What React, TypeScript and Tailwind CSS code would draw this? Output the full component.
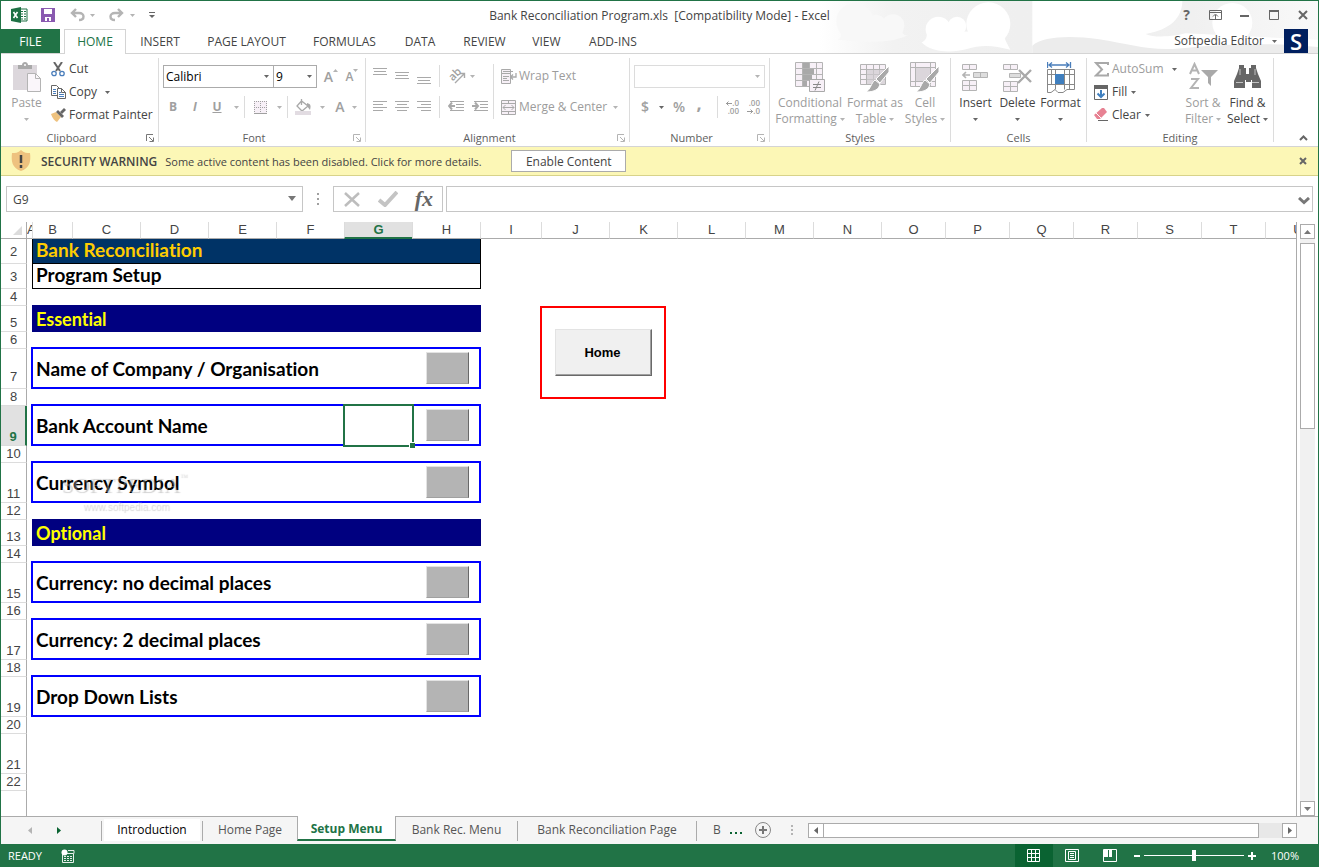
import React from 'react';

type Children = { children?: React.ReactNode };

interface IconProps extends Children {
    w: number;
    h: number;
    className?: string;
}

const Icon: React.FC<IconProps> = ({ w, h, className = '', children }) => (
    <svg width={w} height={h} viewBox={`0 0 ${w} ${h}`} fill="none" className={`shrink-0 ${className}`} aria-hidden="true">
        {children}
    </svg>
);

const Caret: React.FC<{ className?: string }> = ({ className = 'text-[#666666]' }) => (
    <Icon w={5} h={3} className={className}>
        <path d="M0 0h5L2.500 3z" fill="currentColor" />
    </Icon>
);

const GRAY = 'text-[#b4b4b4]';

/* ---------- icons ---------- */

const ExcelLogo = () => (
    <Icon w={17} h={16}>
        <path d="M9 2h7v12H9z" fill="#fff" stroke="#1e7145" />
        <path d="M10 4.500h2M10 7h2M10 9.500h2M10 12h2M13 4.500h2M13 7h2M13 9.500h2M13 12h2" stroke="#1e7145" />
        <path d="M0 2l10-2v16L0 14z" fill="#1e7145" />
        <path d="M2.500 5l4 6M6.500 5l-4 6" stroke="#fff" strokeWidth="1.600" />
    </Icon>
);

const SaveIcon = () => (
    <Icon w={14} h={14}>
        <path d="M0 0h14v14H0z" fill="#8a5ab0" />
        <path d="M3 1h8v5H3zM4 9h6v4H8v-3H6v3H4z" fill="#fff" />
    </Icon>
);

const UndoIcon = ({ flip = false }: { flip?: boolean }) => (
    <Icon w={15} h={14} className={flip ? '-scale-x-100' : ''}>
        <path d="M6 1L2 5l4 4M2 5h7c6 0 6 7 0 7" stroke="#b4b4b4" strokeWidth="2.400" />
    </Icon>
);

const PasteIcon = () => (
    <Icon w={28} h={31}>
        <path d="M0 3h24v25H0z" fill="#dcd7dc" />
        <path d="M5 3h4c0-4 6-4 6 0h4v4H5z" fill="#a9a9a9" />
        <circle cx="12" cy="3" r="1" fill="#fff" />
        <path d="M14.500 11.500h8l5 5v13h-13z" fill="#faf6fa" stroke="#b4b4b4" />
        <path d="M22.500 11.500v5h5" stroke="#b4b4b4" />
    </Icon>
);

const CutIcon = () => (
    <Icon w={15} h={15}>
        <path d="M3 0l6 9M11 0L5 9" stroke="#666" strokeWidth="2" />
        <circle cx="3" cy="11.500" r="2.200" stroke="#4a7ebb" strokeWidth="1.300" />
        <circle cx="11" cy="11.500" r="2.200" stroke="#4a7ebb" strokeWidth="1.300" />
    </Icon>
);

const CopyIcon = () => (
    <Icon w={15} h={14}>
        <path d="M.5.5h5l3 3v7h-8z" fill="#fff" stroke="#666" />
        <path d="M2 4.500h3M2 6.500h3M2 8.500h3" stroke="#4a7ebb" />
        <path d="M6.500 3.500h4l4 4v6h-8z" fill="#fff" stroke="#666" />
        <path d="M10.500 3.500v4h4" stroke="#666" />
        <path d="M8 7.500h2M8 9.500h5M8 11.500h5" stroke="#4a7ebb" />
    </Icon>
);

const BrushIcon = () => (
    <Icon w={15} h={14}>
        <path d="M0 6l5-2 5 5-4 5c-2-1-5-4-6-8z" fill="#eec27f" />
        <path d="M5 4l2-2 6 6-2 2z" fill="#666" />
        <path d="M9 4l4-4 2 2-4 4z" fill="#666" />
    </Icon>
);

const Lines: React.FC<{ rows: [number, number, number][]; h?: number }> = ({ rows, h = 14 }) => (
    <Icon w={14} h={h}>
        {rows.map(([x, y, w]) => (
            <path key={y} d={`M${x} ${y}.5h${w}`} stroke="#a9a9a9" />
        ))}
    </Icon>
);

const VAlign = ({ top }: { top: number }) => (
    <Lines h={22} rows={[[0, top, 14], [1, top + 3, 12], [0, top + 6, 14]]} />
);

const HAlign = ({ x }: { x: number }) => (
    <Lines h={12} rows={[[0, 0, 14], [x, 3, 10], [0, 6, 14], [x, 9, 10]]} />
);

const IndentIcon = ({ out = false }: { out?: boolean }) => (
    <Icon w={16} h={12}>
        <path d="M2 .5h14M8 3.500h8M8 6.500h8M2 9.500h14" stroke="#a9a9a9" />
        <path d={out ? 'M4 1.500L1 5l3 3.500M1 5h6' : 'M3 1.500L6 5 3 8.500M6 5H0'} stroke="#a9a9a9" strokeWidth="2" />
    </Icon>
);

const OrientationIcon = () => (
    <span className="relative block h-4 w-[18px]">
        <span className="absolute top-0 left-0 -rotate-45 text-[11px] leading-3 font-semibold">ab</span>
        <Icon w={18} h={16}>
            <path d="M7 15l9-9M12 5.500h4.500V10" stroke="#a9a9a9" strokeWidth="1.400" />
        </Icon>
    </span>
);

const WrapIcon = () => (
    <Icon w={16} h={15}>
        <path d="M.5.5h9v4h-9zM.5 4.500h9v10h-9z" fill="#f7f0f7" stroke="#a9a9a9" />
        <path d="M2 2.500h10M2 7.500h6M2 9.500h4M2 11.500h6" stroke="#a9a9a9" />
        <path d="M15 4v4h-5M12 5.500L9.500 8l2.500 2.500" stroke="#a9a9a9" strokeWidth="1.300" />
    </Icon>
);

const MergeIcon = () => (
    <Icon w={15} h={15}>
        <path d="M.5.5h14v14H.5zM.5 3.500h14M.5 11.500h14M7.500.5v3M7.500 11.500v3" fill="#f7f0f7" stroke="#a9a9a9" />
        <path d="M2 7.500h11M4.500 5L2 7.500 4.500 10M10.500 5L13 7.500 10.500 10" stroke="#a9a9a9" />
    </Icon>
);

const DecimalIcon = ({ less = false }: { less?: boolean }) => (
    <span className="flex w-4 flex-col items-end text-[8px] leading-2 font-semibold">
        <span className="flex items-center">
            {!less && <Icon w={6} h={5}><path d="M0 2.500h6M2.500.5l-2 2 2 2" stroke="#999" /></Icon>}
            {less ? '.00' : '.0'}
        </span>
        <span className="flex items-center">
            {less && <Icon w={6} h={5}><path d="M0 2.500h6M3.500.5l2 2-2 2" stroke="#999" /></Icon>}
            {less ? '.0' : '.00'}
        </span>
    </span>
);

const ConditionalIcon = () => (
    <Icon w={30} h={30}>
        <path d="M.5.5h27v24H.5zM.5 6.500h27M.5 12.500h27M.5 18.500h27M7.500.5v24M14.500.5v24M21.500.5v24" fill="#f7f0f7" stroke="#b4b4b4" />
        <path d="M8 1h6v5H8zM8 7h11v5H8zM8 13h9v5H8zM8 19h4v5H8z" fill="#a9a9a9" />
        <path d="M14.500 17.500h15v12h-15z" fill="#f7f0f7" stroke="#a9a9a9" />
        <path d="M18 22.500h8M18 25.500h8M24 19.500l-4 9" stroke="#888" />
    </Icon>
);

const TableBrushIcon = ({ cell = false }: { cell?: boolean }) => (
    <Icon w={30} h={30}>
        <path d={cell ? 'M.5.5h25v24H.5zM.5 5.500h25M.5 19.500h25M5.500.5v24M20.500.5v24' : 'M.5 2.500h25v20H.5zM.5 7.500h25M.5 12.500h25M.5 17.500h25M6.500 2.500v20M13.500 2.500v20M19.500 2.500v20'} fill="#f7f0f7" stroke="#b4b4b4" />
        <path d={cell ? 'M6 6h14v13H6z' : 'M7 8h18v14H7z'} fill="#cfcbcf" fillOpacity=".7" />
        <path d="M29 4v6l-9 11-4-4z" fill="#a9a9a9" stroke="#fff" />
        <path d="M15 18l5 4c-1 5-5 8-14 8 5-3 5-9 9-12z" fill="#a9a9a9" stroke="#fff" />
    </Icon>
);

const InsertIcon = () => (
    <Icon w={27} h={29}>
        <path d="M.5 1.500h14v5H.5zM7.500 1.500v5M.5 17.500h14v10H.5zM7.500 17.500v10M.5 22.500h14" fill="#f7f0f7" stroke="#b4b4b4" />
        <path d="M11.500 9.500h14v5h-14zM18.500 9.500v5" fill="#ddd" stroke="#b4b4b4" />
        <path d="M8 12H1M4 9l-3 3 3 3" stroke="#b4b4b4" strokeWidth="1.600" />
    </Icon>
);

const DeleteIcon = () => (
    <Icon w={30} h={29}>
        <path d="M.5 1.500h14v5H.5zM7.500 1.500v5M.5 18.500h14v10H.5zM7.500 18.500v10M.5 23.500h14" fill="#f7f0f7" stroke="#b4b4b4" />
        <path d="M6.500 10.500h11v4h-11z" fill="#ddd" stroke="#b4b4b4" />
        <path d="M16 7l12 12M28 7L15 20" stroke="#a9a9a9" strokeWidth="2.400" />
    </Icon>
);

const FormatIcon = () => (
    <Icon w={28} h={31}>
        <path d="M.5 0v6M23.500 0v6M2 3h20M5 .5L2 3l3 2.500M19 .5L22 3l-3 2.500" stroke="#4a7ebb" strokeWidth="1.300" />
        <path d="M.5 7.500h27v20H20l-4 3h-5l-3-3-4 3H.5zM.5 12.500h27M.5 22.500h27M8.500 7.500v20M17.500 7.500v20M22.500 7.500v20M4.500 7.500v15" fill="#fff" stroke="#888" />
        <path d="M8 12h9v10H8z" fill="#3f7fbf" />
    </Icon>
);

const SigmaIcon = () => (
    <Icon w={16} h={15}>
        <path d="M14 3V1H2l6 6.500L2 13.500h12V11" stroke="#a9a9a9" strokeWidth="2" />
    </Icon>
);

const FillIcon = () => (
    <Icon w={14} h={15}>
        <path d="M.5.5h13v14H.5z" fill="#fff" stroke="#666" />
        <path d="M0 0h14v4H0z" fill="#666" />
        <path d="M7 5v7M3.500 8.500L7 12l3.500-3.500" stroke="#3f7fbf" strokeWidth="2" />
    </Icon>
);

const EraserIcon = () => (
    <Icon w={14} h={14}>
        <path d="M8 0h2l3 4-7 7H3L0 7z" fill="#e78293" />
        <path d="M2 5l5 5" stroke="#fff" />
        <path d="M4 12.500h10" stroke="#666" />
    </Icon>
);

const SortIcon = () => (
    <Icon w={29} h={30}>
        <path d="M1 12L5.500 2 10 12M2.500 8.500h6M2 17h7L2 26h8" stroke="#b4b4b4" strokeWidth="2" />
        <path d="M12 8h17l-7 7v9l-3-3v-6z" fill="#a9a9a9" />
    </Icon>
);

const FindIcon = () => (
    <Icon w={27} h={26}>
        <path d="M5 1h5v3h2v6h3V4h2V1h5v3l2 6 3 7v7h-9v-8h-1v2h-5v-2h-1v8H0v-7l3-7 2-6z" fill="#666" />
        <path d="M6 5v6M21 5v6M2 18.500h7M18 18.500h7" stroke="#fff" strokeOpacity=".6" />
    </Icon>
);

const LauncherIcon = ({ dim = false }: { dim?: boolean }) => (
    <Icon w={8} h={8} className={dim ? GRAY : 'text-[#777777]'}>
        <path d="M.5 7V.5H7M3 3l4 4M7.500 3.500v4h-4" stroke="currentColor" />
    </Icon>
);

/* ---------- ribbon parts ---------- */

interface GroupProps extends Children {
    label: string;
    className: string;
    launcher?: 'normal' | 'dim';
}

const Group: React.FC<GroupProps> = ({ label, className, launcher, children }) => (
    <>
        <section aria-label={label} className={`flex shrink-0 flex-col ${className}`}>
            <div className="flex h-[72px]">{children}</div>
            <div className="flex h-4 items-center">
                <span className="flex-1 text-center text-[11px] leading-4 text-[#5e5e5e]">{label}</span>
                {launcher && (
                    <button aria-label={`${label} settings`} className="mr-1 ml-1"><LauncherIcon dim={launcher === 'dim'} /></button>
                )}
            </div>
        </section>
        <div className="h-[84px] w-px shrink-0 bg-[#dcdcdc]" />
    </>
);

interface BigButtonProps {
    icon: React.ReactNode;
    label: string;
    second?: string;
    className: string;
    dim?: boolean;
}

const BigButton: React.FC<BigButtonProps> = ({ icon, label, second, className, dim }) => (
    <button className={`flex shrink-0 flex-col items-center pt-px whitespace-nowrap ${dim ? 'text-[#9c9c9c]' : 'text-[#444444]'} ${className}`}>
        <span className="flex h-9 items-center justify-center">{icon}</span>
        <span className="leading-4">{label}</span>
        <span className="flex h-4 items-center gap-[3px] leading-4">
            {second}
            <Caret className={dim ? GRAY : undefined} />
        </span>
    </button>
);

interface RowButtonProps {
    icon: React.ReactNode;
    label: string;
    caret?: string;
    dim?: boolean;
}

const RowButton: React.FC<RowButtonProps> = ({ icon, label, caret, dim }) => (
    <button className={`flex h-[23px] items-center pb-px whitespace-nowrap ${dim ? 'text-[#9c9c9c]' : 'text-[#444444]'}`}>
        <span className="flex w-[18px] items-center">{icon}</span>
        {label}
        {caret && <span className={caret}><Caret /></span>}
    </button>
);

interface ComboProps {
    label: string;
    value: string;
    className: string;
    dim?: boolean;
}

const Combo: React.FC<ComboProps> = ({ label, value, className, dim }) => (
    <div className={`relative h-[23px] border ${dim ? 'border-[#dcdcdc]' : 'border-[#ababab]'} ${className}`}>
        <select aria-label={label} disabled={dim} className="block h-full w-full appearance-none bg-transparent pl-[2px] text-black">
            <option>{value}</option>
        </select>
        <span className="pointer-events-none absolute top-[9px] right-1 flex"><Caret className={dim ? GRAY : undefined} /></span>
    </div>
);

const VLine = () => <span className="h-[22px] w-px shrink-0 bg-[#dcdcdc]" />;

const ToolButton: React.FC<Children & { label: string; className?: string }> = ({ label, className = '', children }) => (
    <button aria-label={label} className={`flex h-[22px] shrink-0 items-center justify-center text-[#a0a0a0] ${className}`}>
        {children}
    </button>
);

const ToolCaret: React.FC<{ dark?: boolean; className?: string }> = ({ dark, className = '' }) => (
    <button aria-label="More" className={`flex h-[22px] w-4 shrink-0 items-center justify-center ${className}`}>
        <Caret className={dark ? undefined : GRAY} />
    </button>
);

/* ---------- window chrome ---------- */

const Clouds = () => (
    <svg width="499" height="52" viewBox="0 0 1497 158" preserveAspectRatio="none" className="absolute top-0 right-0" aria-hidden="true">
        <defs>
            <linearGradient id="sky" x1="0" x2="1" y1="0" y2="0">
                <stop offset="0" stopColor="#fff" />
                <stop offset=".15" stopColor="#f2f2f2" />
                <stop offset=".4" stopColor="#efefef" />
                <stop offset=".75" stopColor="#f0f0f0" />
                <stop offset="1" stopColor="#f9f9f9" />
            </linearGradient>
        </defs>
        <path d="M0 0h1497v158H0z" fill="url(#sky)" />
        <g fill="#f8f8f8">
            <circle cx="108" cy="62" r="56" />
            <circle cx="172" cy="70" r="28" />
            <circle cx="222" cy="74" r="34" />
            <path d="M60 90h190c0 10 6 16 16 14-50 26-130 22-210 14 14-8 14-18 4-28z" />
        </g>
        <g fill="#fff">
            <circle cx="508" cy="70" r="66" />
            <circle cx="414" cy="76" r="28" />
            <circle cx="358" cy="86" r="38" />
            <path d="M322 90l230 6c4 20 12 34 22 52-50-14-90-16-130-2-50 14-110 8-136-20 14-6 18-18 14-36z" />
            <path d="M640 0h450c0 50-36 88-110 100 30 14 90 6 120-2l397 20v40H640z" />
            <circle cx="1240" cy="66" r="60" />
        </g>
        <path d="M640 136c30-28 110-32 200-20 90 14 150 36 240 28 120-12 250-20 417-4v18H640z" fill="#ececec" />
    </svg>
);

const TABS: [string, string][] = [
    ['INSERT', 'w-[68px]'],
    ['PAGE LAYOUT', 'w-[105px]'],
    ['FORMULAS', 'w-[91px]'],
    ['DATA', 'w-[60px]'],
    ['REVIEW', 'w-[69px]'],
    ['VIEW', 'w-[55px]'],
    ['ADD-INS', 'w-[78px]'],
];

const TitleBar = () => (
    <header className="relative">
        <Clouds />
        <div className="relative grid h-7 grid-cols-[1fr_auto_1fr] items-center">
            <div className="flex items-center pl-[10px]">
                <ExcelLogo />
                <button aria-label="Save" className="ml-[13px]"><SaveIcon /></button>
                <button aria-label="Undo" className="ml-[15px]"><UndoIcon /></button>
                <button aria-label="Undo history" className="ml-[5px]"><Caret className={GRAY} /></button>
                <button aria-label="Redo" className="ml-[14px]"><UndoIcon flip /></button>
                <button aria-label="Redo history" className="ml-[6px]"><Caret className={GRAY} /></button>
                <button aria-label="Customize toolbar" className="ml-[14px]">
                    <Icon w={6} h={6}><path d="M0 .5h6" stroke="#666" /><path d="M0 3h6L3 6z" fill="#666" /></Icon>
                </button>
            </div>
            <h1 className="pt-px whitespace-pre text-[#444444]">Bank Reconciliation Program.xls  [Compatibility Mode] - Excel</h1>
            <div className="flex justify-end pr-px text-[#666666]">
                <button aria-label="Help" className="flex w-[29px] items-center justify-center text-[14px] leading-5 font-bold">?</button>
                <button aria-label="Ribbon display" className="flex w-[29px] items-center justify-center">
                    <Icon w={13} h={10}><path d="M.5.5h12v9H.5zM.5 2.500h12M6.500 9V5M4 6.500L6.500 4 9 6.500" stroke="currentColor" /></Icon>
                </button>
                <button aria-label="Minimize" className="flex w-[29px] items-center justify-center">
                    <Icon w={9} h={10}><path d="M0 6h9" stroke="currentColor" strokeWidth="2" /></Icon>
                </button>
                <button aria-label="Maximize" className="flex w-[29px] items-center justify-center">
                    <Icon w={10} h={10}><path d="M.5.5h9v9h-9z" stroke="currentColor" /><path d="M0 1h10" stroke="currentColor" strokeWidth="2" /></Icon>
                </button>
                <button aria-label="Close" className="flex w-[29px] items-center justify-center">
                    <Icon w={10} h={10}><path d="M1 1l8 8M9 1L1 9" stroke="currentColor" strokeWidth="2" /></Icon>
                </button>
            </div>
        </div>
        <nav className="relative flex h-[25px] border-b border-[#d4d4d4] text-[#444444]">
            <button className="w-[59px] bg-[#217346] pt-px text-white">FILE</button>
            <button className="-mb-px ml-1 w-[62px] border border-b-0 border-[#d4d4d4] bg-white text-[#217346]">HOME</button>
            {TABS.map(([name, width]) => (
                <button key={name} className={`pt-px whitespace-nowrap ${width}`}>{name}</button>
            ))}
            <div className="flex-1" />
            <button className="mr-[7px] flex items-center gap-2 whitespace-nowrap">Softpedia Editor <Caret /></button>
            <div className="mr-[10px] flex h-6 w-6 items-center justify-center bg-[#001f5f] text-[22px] font-semibold text-white">S</div>
        </nav>
    </header>
);

const Ribbon = () => (
    <div className="flex border-b border-[#d4d4d4] bg-white pt-1">
        <Group label="Clipboard" className="w-[157px]" launcher="normal">
            <BigButton icon={<PasteIcon />} label="Paste" className="w-[50px] pl-px" dim />
            <div className="flex flex-col items-start">
                <RowButton icon={<CutIcon />} label="Cut" />
                <RowButton icon={<CopyIcon />} label="Copy" caret="ml-2" />
                <RowButton icon={<BrushIcon />} label="Format Painter" />
            </div>
        </Group>
        <Group label="Font" className="w-[206px]" launcher="dim">
            <div className="flex flex-col pt-[7px]">
                <div className="flex items-center pl-1">
                    <Combo label="Font" value="Calibri" className="w-[111px]" />
                    <Combo label="Font size" value="9" className="-ml-px w-[44px]" />
                    <ToolButton label="Increase font size" className="w-6 pl-1 text-[14px] font-semibold">
                        A<Icon w={5} h={3} className={`mb-3 ${GRAY}`}><path d="M0 3h5L2.500 0z" fill="currentColor" /></Icon>
                    </ToolButton>
                    <ToolButton label="Decrease font size" className="w-[22px] text-[12px] font-semibold">A<Caret className={`mb-3 ${GRAY}`} /></ToolButton>
                </div>
                <div className="mt-2 flex items-center pl-[3px]">
                    <ToolButton label="Bold" className="w-[22px] font-bold">B</ToolButton>
                    <ToolButton label="Italic" className="w-[22px] font-bold italic">I</ToolButton>
                    <ToolButton label="Underline" className="w-[22px] font-bold underline">U</ToolButton>
                    <ToolCaret />
                    <VLine />
                    <ToolButton label="Borders" className="w-[26px] pl-1">
                        <Icon w={13} h={13}>
                            <path d="M0 0h13v13H0z" fill="#f7f0f7" />
                            <path d="M0 .5h13M0 6.500h13M.5 0v12M6.500 0v12M12.500 0v12" stroke="#a0a0a0" strokeDasharray="1 1" />
                            <path d="M0 12.500h13" stroke="#a0a0a0" />
                        </Icon>
                    </ToolButton>
                    <ToolCaret />
                    <VLine />
                    <ToolButton label="Fill color" className="w-[30px]">
                        <Icon w={17} h={16}>
                            <path d="M6.500 2L2 7l5 5 6-5zM6.500 6V0" stroke="#a9a9a9" strokeWidth="1.300" />
                            <path d="M12 4c4 1 4 3 3 7l-3-4z" fill="#a9a9a9" />
                            <path d="M0 12h16v4H0z" fill="#e2dce2" />
                        </Icon>
                    </ToolButton>
                    <ToolCaret className="-ml-1" />
                    <ToolButton label="Font color" className="w-5 text-[14px] font-semibold">A</ToolButton>
                    <ToolCaret className="-ml-1" />
                </div>
            </div>
        </Group>
        <Group label="Alignment" className="w-[263px]" launcher="dim">
            <div className="flex flex-col gap-[9px] pt-[7px] pl-[7px]">
                <div className="flex h-[22px] items-center gap-2">
                    <ToolButton label="Top align"><VAlign top={3} /></ToolButton>
                    <ToolButton label="Middle align"><VAlign top={7} /></ToolButton>
                    <ToolButton label="Bottom align"><VAlign top={12} /></ToolButton>
                    <VLine />
                    <ToolButton label="Orientation"><OrientationIcon /></ToolButton>
                    <Caret className={`-ml-1 ${GRAY}`} />
                </div>
                <div className="flex h-[22px] items-center gap-2">
                    <ToolButton label="Align left"><HAlign x={0} /></ToolButton>
                    <ToolButton label="Center"><HAlign x={2} /></ToolButton>
                    <ToolButton label="Align right"><HAlign x={4} /></ToolButton>
                    <VLine />
                    <ToolButton label="Decrease indent"><IndentIcon out /></ToolButton>
                    <ToolButton label="Increase indent"><IndentIcon /></ToolButton>
                </div>
            </div>
            <div className="mt-[6px] ml-[5px] h-[55px] w-px bg-[#dcdcdc]" />
            <div className="flex flex-col items-start gap-2 pt-[7px] pl-[7px]">
                <RowButton icon={<WrapIcon />} label="Wrap Text" dim />
                <div className="flex items-center">
                    <RowButton icon={<MergeIcon />} label="Merge & Center" dim />
                    <ToolCaret />
                </div>
            </div>
        </Group>
        <Group label="Number" className="w-[139px]" launcher="dim">
            <div className="flex flex-col gap-2 pt-[7px] pl-1">
                <Combo label="Number format" value="" className="w-[131px]" dim />
                <div className="flex items-center">
                    <ToolButton label="Currency" className="w-[22px] text-[14px] font-semibold">$</ToolButton>
                    <ToolCaret dark className="-ml-[3px]" />
                    <ToolButton label="Percent" className="w-[20px] text-[14px] font-semibold">%</ToolButton>
                    <ToolButton label="Comma" className="w-[20px] pb-2 text-[18px] font-bold">,</ToolButton>
                    <span className="w-2" />
                    <VLine />
                    <ToolButton label="Increase decimal" className="w-[26px]"><DecimalIcon /></ToolButton>
                    <ToolButton label="Decrease decimal" className="w-[16px]"><DecimalIcon less /></ToolButton>
                </div>
            </div>
        </Group>
        <Group label="Styles" className="w-[180px]">
            <BigButton icon={<ConditionalIcon />} label="Conditional" second="Formatting" className="w-[80px]" dim />
            <BigButton icon={<TableBrushIcon />} label="Format as" second="Table" className="w-[50px]" dim />
            <BigButton icon={<TableBrushIcon cell />} label="Cell" second="Styles" className="w-[50px]" dim />
        </Group>
        <Group label="Cells" className="w-[135px]">
            <BigButton icon={<InsertIcon />} label="Insert" className="ml-1 w-[41px]" />
            <BigButton icon={<DeleteIcon />} label="Delete" className="w-[43px]" />
            <BigButton icon={<FormatIcon />} label="Format" className="w-[43px]" />
        </Group>
        <Group label="Editing" className="w-[186px]">
            <div className="flex w-[93px] flex-col items-start pl-[7px]">
                <RowButton icon={<SigmaIcon />} label="AutoSum" caret="ml-2" dim />
                <RowButton icon={<FillIcon />} label="Fill" caret="ml-1" />
                <RowButton icon={<EraserIcon />} label="Clear" caret="ml-1" />
            </div>
            <BigButton icon={<SortIcon />} label="Sort &" second="Filter" className="w-[46px]" dim />
            <BigButton icon={<FindIcon />} label="Find &" second="Select" className="w-[43px]" />
        </Group>
        <div className="flex flex-1 items-end justify-end pr-[10px] pb-[5px]">
            <button aria-label="Collapse ribbon">
                <Icon w={9} h={6}><path d="M1 5l3.500-3.500L8 5" stroke="#666" strokeWidth="2" /></Icon>
            </button>
        </div>
    </div>
);

const SecurityBar = () => (
    <div className="flex h-[29px] items-center border-b border-[#d8d38a] bg-[#fcf7b6] pr-[11px] pl-[10px] text-[#444444]">
        <Icon w={20} h={22}>
            <path d="M10 0c3 3 6 3 9 3 1 8 0 15-9 18C1 18 0 11 1 3c3 0 6 0 9-3z" fill="#eec27f" />
            <path d="M10 5v8M10 15v3" stroke="#444" strokeWidth="2.500" />
        </Icon>
        <strong className="ml-[10px] pt-px font-semibold">SECURITY WARNING</strong>
        <span className="ml-2 w-[346px] pt-px text-[11px] whitespace-nowrap">Some active content has been disabled. Click for more details.</span>
        <button className="h-[22px] w-[115px] border border-[#ababab] bg-white pt-px">Enable Content</button>
        <div className="flex-1" />
        <button aria-label="Dismiss">
            <Icon w={8} h={8}><path d="M1 1l6 6M7 1L1 7" stroke="#666" strokeWidth="2" /></Icon>
        </button>
    </div>
);

const FormulaBar = () => (
    <div className="flex h-[46px] items-center pr-[5px] pl-[5px]">
        <div className="relative h-[26px] w-[297px] border border-[#c6c6c6]">
            <input aria-label="Name box" defaultValue="G9" className="block h-full w-full bg-transparent px-[6px] text-[#444444] outline-none" />
            <span className="pointer-events-none absolute top-[9px] right-[6px]">
                <Icon w={8} h={5}><path d="M0 0h8L4 5z" fill="#777" /></Icon>
            </span>
        </div>
        <div className="flex w-[30px] justify-center">
            <Icon w={2} h={12}><path d="M1 0v2M1 5v2M1 10v2" stroke="#a0a0a0" strokeWidth="2" /></Icon>
        </div>
        <div className="flex h-[26px] w-[110px] items-center justify-between border border-[#c6c6c6] pr-[9px] pl-[9px]">
            <button aria-label="Cancel">
                <Icon w={18} h={17}><path d="M2 2l14 13M16 2L2 15" stroke="#bdbdbd" strokeWidth="2.500" /></Icon>
            </button>
            <button aria-label="Enter">
                <Icon w={20} h={16}><path d="M1 9l6 5L19 1" stroke="#c4c4c4" strokeWidth="4" /></Icon>
            </button>
            <button aria-label="Insert function" className="font-['Liberation_Serif',serif] text-[22px] leading-6 font-bold text-[#666666] italic">fx</button>
        </div>
        <div className="relative ml-[3px] h-[26px] flex-1 border border-[#c6c6c6]">
            <input aria-label="Formula" className="block h-full w-full bg-transparent px-2 outline-none" />
            <span className="pointer-events-none absolute top-[10px] right-[2px]">
                <Icon w={12} h={8}><path d="M1 1l5 4.500L11 1" stroke="#777" strokeWidth="3" /></Icon>
            </span>
        </div>
    </div>
);

/* ---------- worksheet ---------- */

const COLUMNS: [string, string][] = [
    ['A', 'w-[5px]'],
    ['B', 'w-[40px]'],
    ['C', 'w-[68px]'],
    ['D', 'w-[68px]'],
    ['E', 'w-[68px]'],
    ['F', 'w-[68px]'],
    ['G', 'w-[68px]'],
    ['H', 'w-[68px]'],
    ['I', 'w-[61px]'],
    ['J', 'w-[68px]'],
    ['K', 'w-[68px]'],
    ['L', 'w-[68px]'],
    ['M', 'w-[68px]'],
    ['N', 'w-[68px]'],
    ['O', 'w-[64px]'],
    ['P', 'w-[64px]'],
    ['Q', 'w-[64px]'],
    ['R', 'w-[64px]'],
    ['S', 'w-[64px]'],
    ['T', 'w-[64px]'],
];

type RowKind = 'title' | 'subtitle' | 'section' | 'item' | 'gap' | 'tall' | 'rest';

interface SheetRow {
    n?: number;
    kind: RowKind;
    text?: string;
    raised?: boolean;
}

const ROWS: SheetRow[] = [
    { n: 2, kind: 'title', text: 'Bank Reconciliation', raised: true },
    { n: 3, kind: 'subtitle', text: 'Program Setup', raised: true },
    { n: 4, kind: 'gap' },
    { n: 5, kind: 'section', text: 'Essential' },
    { n: 6, kind: 'gap' },
    { n: 7, kind: 'item', text: 'Name of Company / Organisation', raised: true },
    { n: 8, kind: 'gap' },
    { n: 9, kind: 'item', text: 'Bank Account Name' },
    { n: 10, kind: 'gap' },
    { n: 11, kind: 'item', text: 'Currency Symbol' },
    { n: 12, kind: 'gap' },
    { n: 13, kind: 'section', text: 'Optional' },
    { n: 14, kind: 'gap' },
    { n: 15, kind: 'item', text: 'Currency: no decimal places' },
    { n: 16, kind: 'gap' },
    { n: 17, kind: 'item', text: 'Currency: 2 decimal places' },
    { n: 18, kind: 'gap' },
    { n: 19, kind: 'item', text: 'Drop Down Lists' },
    { n: 20, kind: 'gap' },
    { n: 21, kind: 'tall' },
    { n: 22, kind: 'gap' },
    { kind: 'rest' },
];

const ROW_HEIGHT: Record<RowKind, string> = {
    title: 'h-[25px]',
    subtitle: 'h-[25px]',
    section: 'h-[26px]',
    item: 'h-10',
    gap: 'h-[17px]',
    tall: 'h-10',
    rest: 'h-[25px]',
};

const CELL_FONT = "font-['Lato',sans-serif] font-bold whitespace-nowrap [font-variant-ligatures:none]";

const CellContent: React.FC<{ row: SheetRow }> = ({ row }) => {
    switch (row.kind) {
        case 'title':
            return <div className={`-mr-px h-[25px] border border-t-0 border-black bg-[#003366] pl-[3px] text-[19px] leading-[22px] text-[#ffcc00] ${CELL_FONT}`}>{row.text}</div>;
        case 'subtitle':
            return <div className={`-mr-px h-[25px] border border-t-0 border-black bg-white pl-[3px] text-[19px] leading-[22px] text-black ${CELL_FONT}`}>{row.text}</div>;
        case 'section':
            return <div className={`-mt-px -mr-px h-[27px] bg-[#000080] pl-1 text-[18px] leading-7 text-[#ffff00] ${CELL_FONT}`}>{row.text}</div>;
        case 'item':
            return (
                <div className={`relative -mx-px -mt-[2px] flex h-[42px] items-center justify-between border-2 border-[#0000ff] pr-[10px] pl-[3px] text-[19px] text-black ${CELL_FONT}`}>
                    <span className="pt-px">{row.text}</span>
                    <button aria-label={row.text} className="h-8 w-[43px] border border-t-[#e3e3e3] border-r-[#696969] border-b-[#a0a0a0] border-l-[#e3e3e3] bg-[#b4b4b4]" />
                    {row.n === 9 && (
                        <div className="absolute -top-[2px] left-[310px] h-[43px] w-[71px] border-2 border-[#217346] bg-white">
                            <span className="absolute -right-[3px] -bottom-[3px] h-[6px] w-[6px] border-t border-l border-white bg-[#217346]" />
                        </div>
                    )}
                    {row.n === 11 && (
                        <div className="pointer-events-none absolute top-[8px] left-[28px] font-normal text-white/30 [text-shadow:1px_1px_1px_#00000030]">
                            <div className="flex font-['Liberation_Serif',serif] text-[22px] leading-7">SOFTPEDIA<span className="text-[8px] leading-3">™</span></div>
                            <div className="pl-[22px] font-['Liberation_Sans',sans-serif] text-[10px] leading-4">www.softpedia.com</div>
                        </div>
                    )}
                </div>
            );
        default:
            return null;
    }
};

const Sheet = () => (
    <div className="flex flex-1">
        <div className="relative flex min-w-0 flex-1 overflow-hidden border-r border-[#ababab]">
            <table className="w-full table-fixed border-separate border-spacing-0 font-['Liberation_Sans',sans-serif] text-[13px] text-[#444444]">
                <thead>
                    <tr className="h-[17px]">
                        <th className="w-[26px] border-r border-b border-[#ababab] p-0">
                            <span className="flex justify-end pr-1">
                                <Icon w={9} h={9}><path d="M9 0v9H0z" fill="#dcdcdc" /></Icon>
                            </span>
                        </th>
                        {COLUMNS.map(([name, width]) => (
                            <th
                                key={name}
                                scope="col"
                                className={`overflow-hidden p-0 leading-4 font-normal ${width} ${name === 'A' ? '' : 'border-l border-l-[#dcdcdc]'} ${name === 'G' ? 'border-b-2 border-b-[#217346] bg-[#e1e1e1] text-[#217346]' : 'border-b border-b-[#ababab]'}`}
                            >
                                <span className={name === 'G' ? 'block h-[15px] font-bold' : 'block h-4'}>{name}</span>
                            </th>
                        ))}
                        <th scope="col" className="overflow-hidden border-b border-l border-b-[#ababab] border-l-[#dcdcdc] p-0 leading-4 font-normal">
                            <span className="block w-[64px]">U</span>
                        </th>
                    </tr>
                </thead>
                <tbody>
                    {ROWS.map((row, i) => (
                        <tr key={i} className={ROW_HEIGHT[row.kind]}>
                            <th
                                scope="row"
                                className={`p-0 text-center align-bottom leading-4 ${row.n ? 'border-b border-b-[#dcdcdc]' : ''} ${row.raised ? 'pb-[3px]' : ''} ${row.n === 9 ? 'border-r-2 border-r-[#217346] bg-[#e1e1e1] font-bold text-[#217346]' : 'border-r border-r-[#ababab] font-normal'}`}
                            >
                                {row.n}
                            </th>
                            <td className="p-0" />
                            <td colSpan={7} className="p-0 align-top"><CellContent row={row} /></td>
                            <td colSpan={13} className="p-0" />
                        </tr>
                    ))}
                </tbody>
            </table>
            {/* drawing object that floats above the cells */}
            <div className="absolute top-[84px] left-[539px] flex h-[93px] w-[126px] items-center justify-center border-2 border-[#ff0000]">
                <button className="h-[47px] w-[97px] border border-t-[#e3e3e3] border-r-[#696969] border-b-[#696969] border-l-[#e3e3e3] bg-[#f0f0f0] pr-px font-['Liberation_Sans',sans-serif] text-[13px] font-bold text-black shadow-[inset_-1px_-1px_0_#a0a0a0]">
                    Home
                </button>
            </div>
        </div>
        <div className="flex w-[21px] flex-col px-[3px] pt-[2px]">
            <button aria-label="Scroll up" className="flex h-[15px] items-center justify-center border border-[#ababab] bg-white">
                <Icon w={7} h={4}><path d="M0 4h7L3.500 0z" fill="#777" /></Icon>
            </button>
            <div className="flex-1 bg-[#f1f1f1] pt-1">
                <div className="h-[186px] border border-[#ababab] bg-white" />
            </div>
            <button aria-label="Scroll down" className="flex h-[15px] items-center justify-center border border-[#ababab] bg-white">
                <Icon w={7} h={4}><path d="M0 0h7L3.500 4z" fill="#777" /></Icon>
            </button>
        </div>
    </div>
);

const TabDivider = () => <div className="mt-1 h-5 w-px bg-[#ababab]" />;

const SheetTabs = () => (
    <div className="flex h-7 shrink-0 items-start border-t border-[#ababab] bg-[#f5f5f5] text-[#555555]">
        <div className="flex h-[26px] w-[100px] items-center">
            <button aria-label="Previous sheets" className="ml-[27px]"><Icon w={4} h={7}><path d="M4 0v7L0 3.500z" fill="#b4b4b4" /></Icon></button>
            <button aria-label="Next sheets" className="ml-[25px]"><Icon w={4} h={7}><path d="M0 0v7l4-3.500z" fill="#0a6332" /></Icon></button>
        </div>
        <TabDivider />
        <button className="mx-[2px] mt-[2px] h-[22px] w-[96px] bg-white text-black">Introduction</button>
        <TabDivider />
        <button className="h-[26px] w-[94px]">Home Page</button>
        <button className="-mt-px h-[25px] w-[99px] border-x border-b-2 border-x-[#ababab] border-b-[#217346] bg-white pt-[3px] font-bold text-[#217346]">Setup Menu</button>
        <button className="h-[26px] w-[121px]">Bank Rec. Menu</button>
        <TabDivider />
        <button className="h-[26px] w-[178px]">Bank Reconciliation Page</button>
        <TabDivider />
        <button className="ml-4 h-[26px]">B</button>
        <button aria-label="More sheets" className="ml-[9px] flex h-[26px] items-center pt-[6px]">
            <Icon w={12} h={2}><path d="M0 1h2M5 1h2M10 1h2" stroke="#0a6332" strokeWidth="2" /></Icon>
        </button>
        <button aria-label="New sheet" className="ml-[13px] flex h-[26px] items-center">
            <Icon w={16} h={16}>
                <circle cx="8" cy="8" r="7.500" stroke="#888" />
                <path d="M8 4v8M4 8h8" stroke="#777" strokeWidth="2" />
            </Icon>
        </button>
        <div className="ml-[20px] flex h-[26px] items-center">
            <Icon w={2} h={10}><path d="M1 0v2M1 4v2M1 8v2" stroke="#b4b4b4" strokeWidth="2" /></Icon>
        </div>
        <div className="mt-[6px] mr-[21px] ml-[15px] flex h-[15px] flex-1 bg-[#e8e8e8]">
            <button aria-label="Scroll left" className="flex w-4 items-center justify-center border border-[#ababab] bg-white">
                <Icon w={4} h={7}><path d="M4 0v7L0 3.500z" fill="#666" /></Icon>
            </button>
            <div className="-ml-px flex-1 border border-[#ababab] bg-white" />
            <button aria-label="Scroll right" className="ml-[23px] flex w-[15px] items-center justify-center border border-[#ababab] bg-white">
                <Icon w={4} h={7}><path d="M0 0v7l4-3.500z" fill="#666" /></Icon>
            </button>
        </div>
    </div>
);

const StatusBar = () => (
    <footer className="flex h-[23px] shrink-0 items-center bg-[#217346] text-[11px] text-white">
        <span className="pl-[7px]">READY</span>
        <button aria-label="Record macro" className="ml-[19px]">
            <Icon w={14} h={14}>
                <path d="M1.500 4.500h11v9h-11zM7 1.500h6v3" stroke="#e6efe9" />
                <path d="M3 7.500h8M3 9.500h8M3 11.500h8" stroke="#e6efe9" strokeDasharray="2 1" />
                <circle cx="3.500" cy="3.500" r="3" fill="#fff" />
            </Icon>
        </button>
        <div className="flex-1" />
        <button aria-label="Normal view" className="flex h-full w-[38px] items-center justify-center bg-[#0a6332] pr-px">
            <Icon w={13} h={13}><path d="M.5.5h12v12H.5zM.5 4.500h12M.5 8.500h12M4.500.5v12M8.500.5v12" stroke="#fff" /></Icon>
        </button>
        <button aria-label="Page layout view" className="flex h-full w-[38px] items-center justify-center">
            <Icon w={14} h={13}><path d="M.5.5h13v12H.5zM3.500 2.500h7v8h-7zM5 4.500h4M5 6.500h4M5 8.500h4" stroke="#fff" /></Icon>
        </button>
        <button aria-label="Page break view" className="flex h-full w-[38px] items-center justify-center">
            <Icon w={14} h={13}><path d="M.5.5h13v12H.5z" stroke="#fff" /><path d="M1 1h4v7H1zM6 1h3v7H6z" fill="#fff" /></Icon>
        </button>
        <button aria-label="Zoom out" className="ml-[5px]"><Icon w={6} h={10}><path d="M0 5h6" stroke="#fff" strokeWidth="2" /></Icon></button>
        <input
            type="range"
            aria-label="Zoom"
            defaultValue={50}
            className="ml-1 h-px w-[100px] appearance-none bg-white [&::-webkit-slider-thumb]:h-[11px] [&::-webkit-slider-thumb]:w-1 [&::-webkit-slider-thumb]:appearance-none [&::-webkit-slider-thumb]:bg-white"
        />
        <button aria-label="Zoom in" className="ml-1"><Icon w={8} h={10}><path d="M0 5h8M4 1v8" stroke="#fff" strokeWidth="2" /></Icon></button>
        <button className="mr-[19px] ml-[15px]">100%</button>
    </footer>
);

const App = () => (
    <div className="flex min-h-screen flex-col border-x border-t border-[#217346] bg-white font-['Open_Sans','Noto_Sans',sans-serif] text-[12px] leading-4">
        <TitleBar />
        <Ribbon />
        <SecurityBar />
        <FormulaBar />
        <Sheet />
        <SheetTabs />
        <StatusBar />
    </div>
);

export default App;
